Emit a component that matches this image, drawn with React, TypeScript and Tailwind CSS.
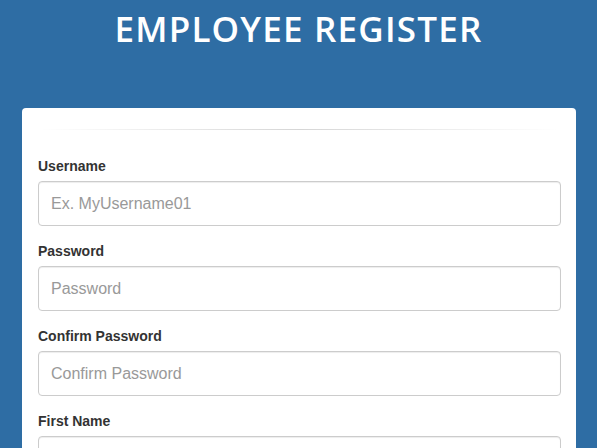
import React from 'react';

const fields = [
  { label: 'Username', placeholder: 'Ex. MyUsername01', type: 'text' },
  { label: 'Password', placeholder: 'Password', type: 'password' },
  { label: 'Confirm Password', placeholder: 'Confirm Password', type: 'password' },
  { label: 'First Name', placeholder: '', type: 'text' },
];

function App() {
  return (
    <div className="min-h-screen bg-[#2e6da4] font-['Liberation_Sans',Arial,sans-serif] text-[#333]">
      <h1 className="pt-[9px] h-[108px] text-center text-[35px] leading-[40px] font-semibold text-white font-['Open_Sans',sans-serif] tracking-[1.2px]">
        EMPLOYEE REGISTER
      </h1>
      <div className="mx-[22px] w-[554px] bg-white rounded-[4px] pl-4 pr-[15px] pt-[21px]">
        <div className="h-px mx-[2px] bg-gradient-to-r from-transparent via-[#d6d6d6] to-transparent" />
        <form className="pt-[26px]">
          {fields.map((f) => (
            <div key={f.label} className="mb-[15px]">
              <label className="block mb-[5px] text-[14px] leading-[20px] font-bold">{f.label}</label>
              <input
                type={f.type}
                placeholder={f.placeholder}
                className="block w-full h-[45px] px-3 border border-[#ccc] rounded-[4px] text-[16px] placeholder:text-[#999] shadow-[inset_0_1px_1px_rgba(0,0,0,0.075)] outline-none"
              />
            </div>
          ))}
        </form>
      </div>
    </div>
  );
}

export default App;
